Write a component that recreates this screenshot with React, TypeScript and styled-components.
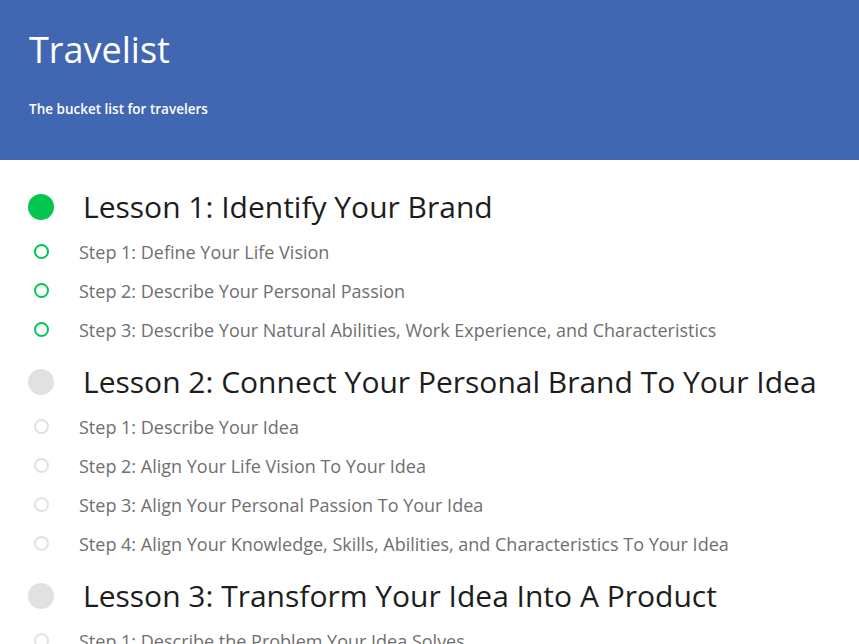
import React from 'react';
import styled, { createGlobalStyle } from 'styled-components';

const GlobalStyle = createGlobalStyle`
  body {
    margin: 0;
    background: #ffffff;
    font-family: "Open Sans", "Noto Sans", sans-serif;
  }
`;

type Status = 'done' | 'todo';

interface ILesson {
  title: string;
  status: Status;
  steps: string[];
}

const lessons: ILesson[] = [
  {
    title: 'Lesson 1: Identify Your Brand',
    status: 'done',
    steps: [
      'Step 1: Define Your Life Vision',
      'Step 2: Describe Your Personal Passion',
      'Step 3: Describe Your Natural Abilities, Work Experience, and Characteristics',
    ],
  },
  {
    title: 'Lesson 2: Connect Your Personal Brand To Your Idea',
    status: 'todo',
    steps: [
      'Step 1: Describe Your Idea',
      'Step 2: Align Your Life Vision To Your Idea',
      'Step 3: Align Your Personal Passion To Your Idea',
      'Step 4: Align Your Knowledge, Skills, Abilities, and Characteristics To Your Idea',
    ],
  },
  {
    title: 'Lesson 3: Transform Your Idea Into A Product',
    status: 'todo',
    steps: ['Step 1: Describe the Problem Your Idea Solves'],
  },
];

const Header = styled.header`
  height: 160px;
  box-sizing: border-box;
  padding: 24px 29px 0;
  background-color: #4267b2;
  color: white;
`;

const BrandTitle = styled.h1`
  margin: 0;
  font-size: 36px;
  font-weight: 400;
  line-height: 52px;
`;

const Tagline = styled.p`
  margin: 23px 0 0;
  font-size: 13.5px;
  font-weight: 600;
  line-height: 20px;
`;

const List = styled.main`
  padding: 14px 0 0 28px;
`;

const LessonRow = styled.div`
  display: flex;
  align-items: center;
  height: 51px;
  padding-top: 7px;
`;

const StepRow = styled.div`
  display: flex;
  align-items: center;
  height: 39px;
`;

const IconSlot = styled.span`
  width: 26px;
  flex-shrink: 0;
  display: flex;
  justify-content: center;
`;

const Dot = styled.span<{ $done: boolean }>`
  width: 26px;
  height: 26px;
  border-radius: 50%;
  background: ${({ $done }) => ($done ? '#03c651' : '#e1e1e1')};
`;

const Ring = styled.span<{ $done: boolean }>`
  width: 15px;
  height: 15px;
  box-sizing: border-box;
  border-radius: 50%;
  border: 2px solid ${({ $done }) => ($done ? '#03c651' : '#e1e1e1')};
`;

const LessonTitle = styled.h2`
  margin: 0 0 0 29px;
  font-size: 30px;
  font-weight: 400;
  color: #1d1d1d;
  white-space: nowrap;
`;

const StepLabel = styled.span`
  margin-left: 25px;
  font-size: 18px;
  color: #6f6f6f;
  white-space: nowrap;
`;

const App: React.FC = () => (
  <>
    <GlobalStyle />
    <Header>
      <BrandTitle>Travelist</BrandTitle>
      <Tagline>The bucket list for travelers</Tagline>
    </Header>
    <List>
      {lessons.map((lesson) => (
        <section key={lesson.title}>
          <LessonRow>
            <IconSlot>
              <Dot $done={lesson.status === 'done'} />
            </IconSlot>
            <LessonTitle>{lesson.title}</LessonTitle>
          </LessonRow>
          {lesson.steps.map((step) => (
            <StepRow key={step}>
              <IconSlot>
                <Ring $done={lesson.status === 'done'} />
              </IconSlot>
              <StepLabel>{step}</StepLabel>
            </StepRow>
          ))}
        </section>
      ))}
    </List>
  </>
);

export default App;
